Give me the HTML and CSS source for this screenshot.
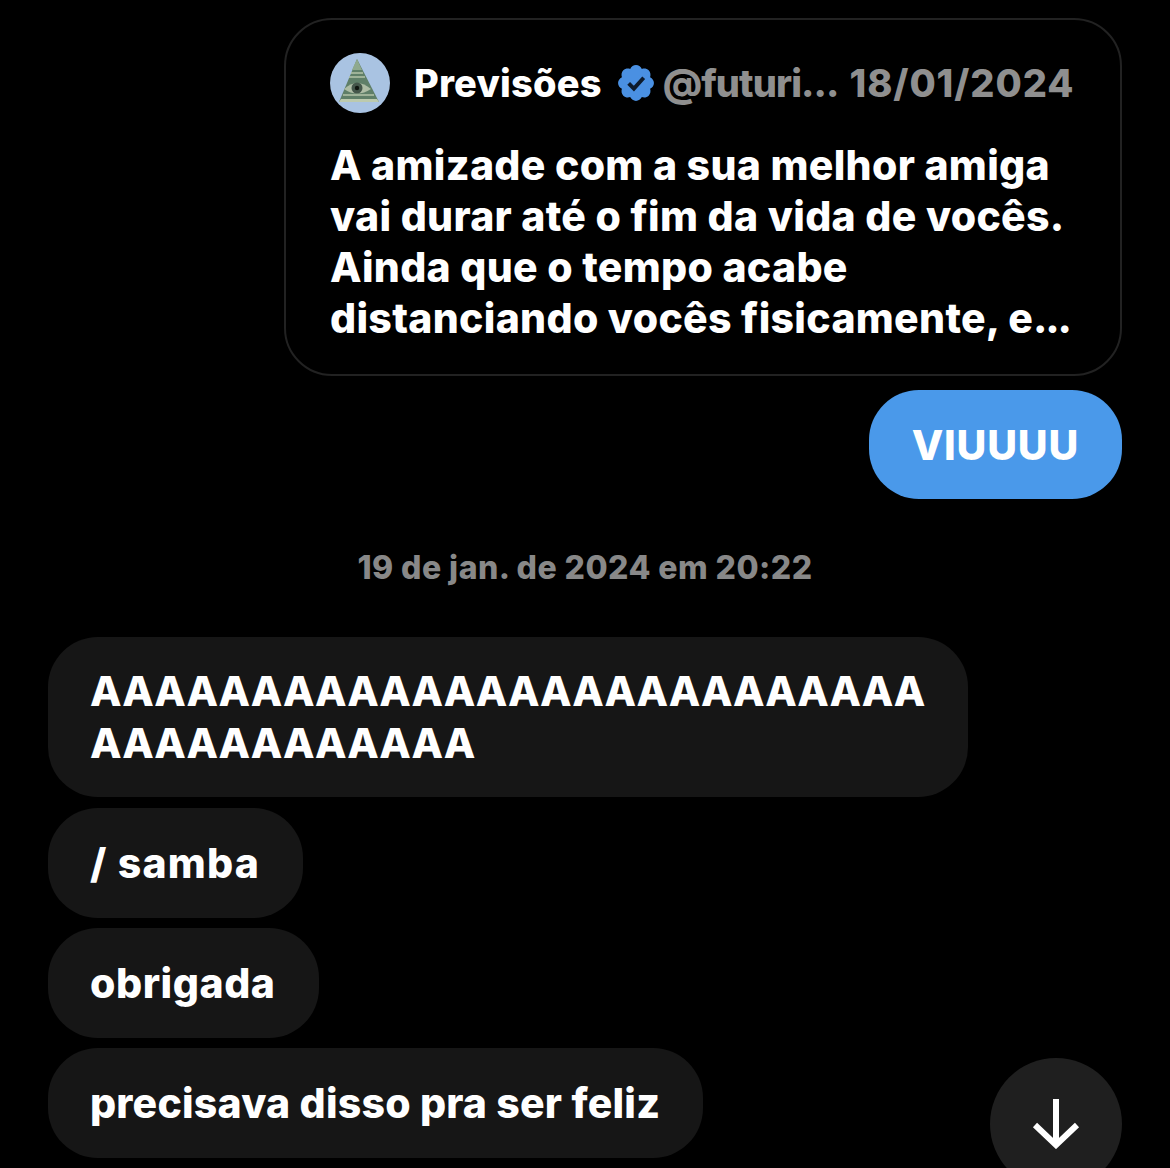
FILE: index.html
```html
<!DOCTYPE html>
<html lang="pt-BR">
<head>
    <meta charset="UTF-8">
    <title>Mensagens</title>
    <link rel="stylesheet" href="styles.css">
</head>
<body>
<div class="chat">
    <div class="quote">
        <div class="quote-head">
            <svg class="avatar" viewBox="0 0 60 60">
                <circle cx="30" cy="30" r="30" fill="#a9c3e2"/>
                <path d="M27 6 L49 49 H9 Z" fill="#5f7f68"/>
                <path d="M27 6 L32 17 H22 Z" fill="#8fa98e"/>
                <path d="M21 20 H33 M19 24 H35 M13 42 H44" stroke="#b4c4a8" stroke-width="1.4"/>
                <path d="M11 46 H47 L49 49 H9 Z" fill="#bccaae"/>
                <path d="M14 36 Q27 24 41 36 Q27 45 14 36 Z" fill="#aebda5"/>
                <circle cx="27" cy="35" r="5.5" fill="#44564a"/>
                <circle cx="27" cy="35" r="2.2" fill="#10160f"/>
            </svg>
            <span class="name">Previsões</span>
            <svg class="badge" viewBox="0 0 24 24">
                <path fill="#4a90e2" d="M22.25 12c0-1.43-.88-2.67-2.19-3.34.46-1.39.2-2.9-.81-3.91s-2.52-1.27-3.91-.81c-.66-1.31-1.91-2.19-3.34-2.19s-2.67.88-3.33 2.19c-1.4-.46-2.91-.2-3.92.81s-1.26 2.52-.8 3.91c-1.31.67-2.2 1.91-2.2 3.34s.89 2.67 2.2 3.34c-.46 1.39-.21 2.9.8 3.91s2.52 1.26 3.91.81c.67 1.31 1.91 2.19 3.34 2.19s2.68-.88 3.34-2.19c1.39.45 2.9.2 3.91-.81s1.27-2.52.81-3.91c1.31-.67 2.19-1.91 2.19-3.34z"/>
                <path fill="none" stroke="#0d1a2b" stroke-width="2.2" d="M7.8 12.2l3 3 5.6-6.2"/>
            </svg>
            <span class="handle">@futuri...</span>
            <span class="handle date">18/01/2024</span>
        </div>
        <p class="quote-text">A amizade com a sua melhor amiga<br>vai durar até o fim da vida de vocês.<br>Ainda que o tempo acabe<br>distanciando vocês fisicamente, e<span class="dots">...</span></p>
    </div>
    <div class="bubble mine">VIUUUU</div>
    <div class="time">19 de jan. de 2024 em 20:22</div>
    <div class="incoming">
        <div class="bubble theirs caps">AAAAAAAAAAAAAAAAAAAAAAAAAA<br>AAAAAAAAAAAA</div>
        <div class="bubble theirs wider">/ samba</div>
        <div class="bubble theirs wide">obrigada</div>
        <div class="bubble theirs">precisava disso pra ser feliz</div>
    </div>
</div>
<div class="scroll-down">
    <svg viewBox="0 0 50 50" width="50" height="50">
        <path d="M25 0 V46 M4 26 L25 46 L46 26" fill="none" stroke="#fff" stroke-width="6"/>
    </svg>
</div>
</body>
</html>
```

FILE: styles.css
```css
*{
    padding: 0;
    margin: 0;
    box-sizing: border-box;
}
html,body{
    height: 1168px;
    overflow: hidden;
    background: #000;
}
body{
    position: relative;
    font-family: "Inter", "Liberation Sans", sans-serif;
    font-weight: 800;
    color: #fff;
}
.chat{
    display: flex;
    flex-direction: column;
    padding: 18px 48px 0;
}
.quote{
    align-self: flex-end;
    width: 838px;
    height: 358px;
    padding: 33px 44px 0;
    border: 2px solid #222;
    border-radius: 48px;
}
.quote-head{
    display: flex;
    align-items: center;
    height: 60px;
    font-size: 38px;
    white-space: nowrap;
}
.avatar{
    flex-shrink: 0;
    width: 60px;
    height: 60px;
    margin-right: 24px;
}
.name{
    letter-spacing: 0.2px;
}
.badge{
    flex-shrink: 0;
    width: 42px;
    height: 42px;
    margin: 0 6px 0 13px;
}
.handle{
    color: #8f8f8f;
    letter-spacing: -0.9px;
}
.date{
    margin-left: 11px;
    letter-spacing: 0.9px;
}
.quote-text{
    margin-top: 27px;
    font-size: 41px;
    line-height: 51px;
    letter-spacing: 0.3px;
    white-space: nowrap;
}
.dots{
    letter-spacing: -2.2px;
}
.bubble{
    font-size: 41px;
    line-height: 51px;
    letter-spacing: 0.2px;
    padding: 29.5px 43px 29.5px 42px;
    border-radius: 50px;
    white-space: nowrap;
}
.mine{
    align-self: flex-end;
    margin-top: 14px;
    padding: 30px 43px 28px;
    letter-spacing: 0.8px;
    background: #4a99ea;
}
.time{
    margin-top: 51px;
    text-align: center;
    font-size: 32px;
    line-height: 36px;
    letter-spacing: 0.46px;
    color: #888;
}
.incoming{
    display: flex;
    flex-direction: column;
    align-items: flex-start;
    gap: 10px;
    margin-top: 51px;
}
.theirs{
    background: #161616;
}
.caps{
    padding-top: 28px;
    padding-bottom: 28px;
    line-height: 52px;
    margin-bottom: 1px;
    letter-spacing: 0;
}
.wide{
    letter-spacing: 0.55px;
}
.wider{
    letter-spacing: 1.2px;
}
.scroll-down{
    position: absolute;
    left: 990px;
    top: 1058px;
    width: 132px;
    height: 132px;
    border-radius: 50%;
    background: #1f1f1f;
    display: flex;
    align-items: center;
    justify-content: center;
}
```
